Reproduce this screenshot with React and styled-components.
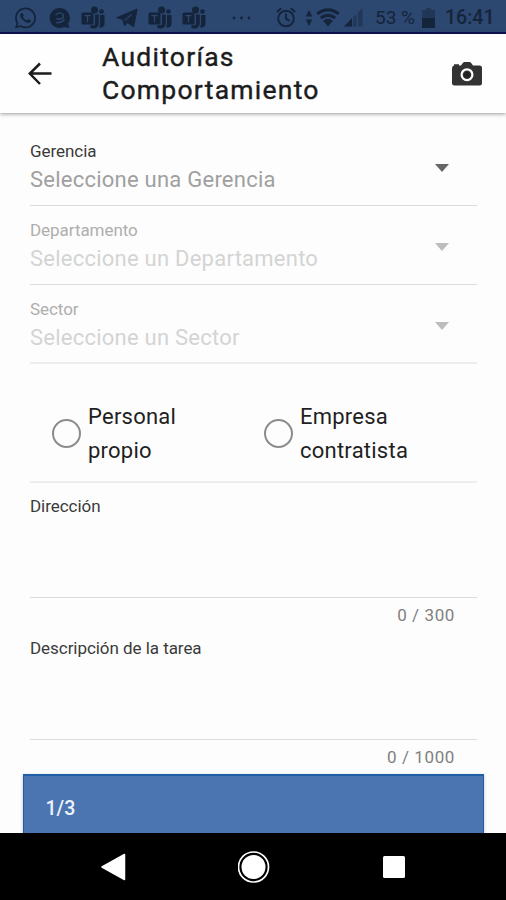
import React, { useState } from 'react';
import styled, { createGlobalStyle } from 'styled-components';
import { FaWhatsapp } from 'react-icons/fa';

const GlobalStyle = createGlobalStyle`
  * {
    box-sizing: border-box;
  }

  body {
    margin: 0;
    background: #fdfdfd;
    font-family: Roboto, 'Noto Sans', sans-serif;
  }
`;

const Screen = styled.div`
  display: flex;
  flex-direction: column;
  width: 506px;
  height: 900px;
  overflow: hidden;
  background: #fdfdfd;
`;

const StatusBar = styled.div`
  display: flex;
  align-items: center;
  flex: 0 0 34px;
  padding: 3px 0 0 14px;
  background: #2c4770;
  border-bottom: 2px solid #0c1255;
  color: #14243b;
`;

const StatusItem = styled.span`
  display: flex;
  flex: none;
  align-items: center;
  width: ${props => props.$width}px;
  margin-right: ${props => props.$gap || 0}px;

  svg {
    display: block;
  }
`;

const StatusText = styled(StatusItem)`
  font-size: ${props => props.$size}px;
  font-weight: ${props => props.$weight};
  line-height: 24px;
  white-space: nowrap;
`;

const Header = styled.header`
  display: flex;
  align-items: center;
  flex: 0 0 79px;
  padding: 0 24px 0 27px;
  background: #fefefe;
  box-shadow: 0 1px 4px rgba(0, 0, 0, 0.4);
  z-index: 1;
`;

const IconButton = styled.button`
  display: flex;
  padding: 0;
  border: 0;
  background: none;
`;

const Title = styled.h1`
  flex: 1;
  margin: 0 0 1px 50px;
  color: #1c1c1c;
  font-size: 26.5px;
  font-weight: 400;
  line-height: 33px;
  letter-spacing: 1.25px;
  -webkit-text-stroke: 0.4px #1c1c1c;
`;

const Form = styled.form`
  flex: 1;
  min-height: 0;
  padding: 14px 29px 0 30px;
`;

const SelectField = styled.div`
  display: flex;
  align-items: center;
  justify-content: space-between;
  height: 79px;
  padding: 3px 28px 0 0;
  border-bottom: ${props => (props.$last ? '2px solid #ededed' : '1px solid #dcdcdc')};
`;

const Label = styled.div`
  color: ${props => (props.$disabled ? '#aeaeae' : '#3a3a3a')};
  font-size: 17px;
  line-height: 20px;
  letter-spacing: -0.05px;
`;

const Placeholder = styled.div`
  margin-top: 5px;
  color: ${props => (props.$disabled ? '#d4d4d4' : '#a0a0a0')};
  font-size: 22px;
  line-height: 28px;
  letter-spacing: 0.24px;
`;

const Caret = styled.span`
  margin-top: 1px;
  border: 7px solid transparent;
  border-top: 8px solid ${props => (props.$disabled ? '#bdbdbd' : '#666')};
  border-bottom: 0;
`;

const RadioRow = styled.div`
  display: grid;
  grid-template-columns: 212px 1fr;
  height: 119px;
  padding: 23px 0 0 22px;
  border-bottom: 2px solid #ededed;
`;

const RadioOption = styled.label`
  display: flex;
  align-items: center;
  gap: 7px;
  height: 94px;
`;

const RadioCircle = styled.span`
  width: 29px;
  height: 29px;
  margin-bottom: 1px;
  border: 2.5px solid #8c8c8c;
  border-radius: 50%;
`;

const RadioText = styled.span`
  width: 130px;
  color: #1f1f1f;
  font-size: 22px;
  line-height: 34px;
  letter-spacing: 0.24px;
`;

const TextField = styled.div`
  display: flex;
  flex-direction: column;
  height: ${props => props.$height}px;
  padding-top: ${props => props.$top}px;
  border-bottom: 1px solid #dcdcdc;
`;

const Counter = styled.div`
  height: 34px;
  padding: 7px 22px 0 0;
  color: #808080;
  font-size: 17px;
  line-height: 20px;
  letter-spacing: 0.6px;
  text-align: right;
`;

const Footer = styled.footer`
  display: flex;
  align-items: center;
  flex: 0 0 59px;
  margin: 0 22px 0 23px;
  padding: 7px 21.5px 0;
  background: #4b75b0;
  border: 2px solid #1e5ea6;
  border-width: 2px 1px 0;
  box-shadow: 0 1px 3px rgba(0, 0, 0, 0.25);
  color: #eef3fb;
  font-size: 19.5px;
  font-weight: 500;
`;

const NavBar = styled.nav`
  display: grid;
  grid-template-columns: 138px 130px 1fr;
  align-items: center;
  flex: 0 0 67px;
  padding-left: 100px;
  background: #000;
  z-index: 1;
`;

const ChatIcon = () => (
  <svg width="22" height="22" viewBox="0 0 22 22" fill="none">
    <path d="M11 1a10 10 0 1 0 4 19l5.500 1-1.400-4.400A10 10 0 0 0 11 1z" fill="currentColor" />
    <path d="M6.500 8q4.500-4 7.500-.5 1.500 3-2 4.500H7.500M7 15.500q5 1 8.500-3" stroke="#2c4770" strokeWidth="1.300" />
  </svg>
);

const TeamsIcon = () => (
  <svg width="25" height="24" viewBox="0 0 25 24" fill="currentColor">
    <circle cx="13.500" cy="4" r="3.500" />
    <circle cx="20.500" cy="5.500" r="2.300" />
    <rect x="0.500" y="6.500" width="12" height="12" rx="1.500" />
    <path d="M14 8.500h3.800v9a5.300 5.300 0 0 1-9 3.500l1.200-1.800h2.500q1.500 0 1.500-2z" />
    <path d="M19 9h4.500v8.500q0 4-4.500 4.200l-1-.7q1-1.200 1-3.500z" />
    <path d="M3.500 9.700h6M6.500 9.700v6.500" stroke="#2c4770" strokeWidth="1.200" />
  </svg>
);

const TelegramIcon = () => (
  <svg width="22" height="20" viewBox="0 0 22 20" fill="currentColor">
    <path d="M.7 9.200 20.500.8q1.200-.3 1 1L18.300 18q-.4 1.500-1.700.7l-5-3.700-2.700 2.700q-.8.600-1-.5L6.300 11.700.8 10.300q-.7-.5-.1-1.100z" />
    <path d="M7.500 12 16 6l-7 7.500" fill="none" stroke="#2c4770" strokeWidth="0.800" />
  </svg>
);

const DotsIcon = () => (
  <svg width="19" height="4" viewBox="0 0 19 4" fill="currentColor">
    <circle cx="2" cy="2" r="1.400" />
    <circle cx="9.500" cy="2" r="1.400" />
    <circle cx="17" cy="2" r="1.400" />
  </svg>
);

const AlarmIcon = () => (
  <svg width="20" height="21" viewBox="0 0 20 21" fill="none" stroke="currentColor" strokeWidth="1.900">
    <circle cx="10" cy="11.500" r="7.800" />
    <path d="M10 6.500v5.200l3.500 2.200M.8 5 5.200 1.300M14.800 1.300 19.200 5" />
  </svg>
);

const DataIcon = () => (
  <svg width="8" height="18" viewBox="0 0 8 18" fill="currentColor">
    <path d="M4 1 7.300 7.500H.7zM4 17l3.300-6.500H.7z" />
  </svg>
);

const WifiIcon = () => (
  <svg width="24" height="19" viewBox="0 0 24 19" fill="none" stroke="currentColor" strokeWidth="3">
    <path d="M1.200 5.800Q12-2.200 22.800 5.800M4.800 9.900q7.200-5 14.400 0" />
    <path d="m12 18.500-5-6q5-3.500 10 0z" fill="currentColor" stroke="none" />
  </svg>
);

const SignalIcon = () => (
  <svg width="19" height="19" viewBox="0 0 19 19" fill="currentColor">
    <path d="M0 18.500 8 10v8.500z" />
    <path d="M9 9.500 12.500 6v12.500H9zM14 4.500 18.500 0v18.500H14z" opacity="0.4" />
  </svg>
);

const BatteryIcon = () => (
  <svg width="13" height="20" viewBox="0 0 13 20" fill="currentColor">
    <path d="M0 2h4V0h5v2h4v8H0z" opacity="0.45" />
    <path d="M0 10h13v10H0z" />
  </svg>
);

const BackIcon = () => (
  <svg width="25" height="24" viewBox="0 0 25 24" fill="none" stroke="#1c1c1c" strokeWidth="2.500">
    <path d="M24.500 11.500H3M13 1.500 2.800 11.500 13 22" />
  </svg>
);

const CameraIcon = () => (
  <svg width="30" height="24" viewBox="0 0 30 24">
    <path
      d="M2 3.500V2.200h5v1.300h2L11 .8q.6-.8 1.500-.8h5q.9 0 1.500.8l2 2.700h6.500q2.500 0 2.500 2.500v15q0 2.500-2.500 2.500h-25Q0 23.500 0 21V6q0-2 2-2.500z"
      fill="#333"
    />
    <circle cx="15" cy="12.700" r="5.400" fill="#333" stroke="#fff" strokeWidth="2.200" />
    <circle cx="15" cy="12.700" r="3" fill="#222" />
  </svg>
);

const selects = [
  { label: 'Gerencia', placeholder: 'Seleccione una Gerencia', disabled: false },
  { label: 'Departamento', placeholder: 'Seleccione un Departamento', disabled: true },
  { label: 'Sector', placeholder: 'Seleccione un Sector', disabled: true },
];

const options = ['Personal propio', 'Empresa contratista'];

const App = () => {
  const [selected, setSelected] = useState(null);

  return (
    <>
      <GlobalStyle />
      <Screen>
        <StatusBar>
          <StatusItem $width={23} $gap={12}><FaWhatsapp size={24} /></StatusItem>
          <StatusItem $width={22} $gap={10}><ChatIcon /></StatusItem>
          <StatusItem $width={25} $gap={10}><TeamsIcon /></StatusItem>
          <StatusItem $width={22} $gap={10}><TelegramIcon /></StatusItem>
          <StatusItem $width={25} $gap={9}><TeamsIcon /></StatusItem>
          <StatusItem $width={25} $gap={25}><TeamsIcon /></StatusItem>
          <StatusItem $width={19} $gap={25}><DotsIcon /></StatusItem>
          <StatusItem $width={20} $gap={9}><AlarmIcon /></StatusItem>
          <StatusItem $width={8} $gap={3}><DataIcon /></StatusItem>
          <StatusItem $width={24} $gap={4}><WifiIcon /></StatusItem>
          <StatusItem $width={19} $gap={12}><SignalIcon /></StatusItem>
          <StatusText $width={41} $gap={6} $size={19} $weight={400}>53 %</StatusText>
          <StatusItem $width={13} $gap={10}><BatteryIcon /></StatusItem>
          <StatusText $width={50} $size={19.5} $weight={500}>16:41</StatusText>
        </StatusBar>
        <Header>
          <IconButton type="button" aria-label="Volver"><BackIcon /></IconButton>
          <Title>Auditorías<br />Comportamiento</Title>
          <IconButton type="button" aria-label="Foto"><CameraIcon /></IconButton>
        </Header>
        <Form>
          {selects.map((field, index) => (
            <SelectField key={field.label} $last={index === selects.length - 1}>
              <div>
                <Label $disabled={field.disabled}>{field.label}</Label>
                <Placeholder $disabled={field.disabled}>{field.placeholder}</Placeholder>
              </div>
              <Caret $disabled={field.disabled} />
            </SelectField>
          ))}
          <RadioRow>
            {options.map(option => (
              <RadioOption key={option} onClick={() => setSelected(option)}>
                <RadioCircle role="radio" aria-checked={selected === option} />
                <RadioText>{option}</RadioText>
              </RadioOption>
            ))}
          </RadioRow>
          <TextField $height={115} $top={13}>
            <Label>Dirección</Label>
          </TextField>
          <Counter>0 / 300</Counter>
          <TextField $height={108} $top={6}>
            <Label>Descripción de la tarea</Label>
          </TextField>
          <Counter>0 / 1000</Counter>
        </Form>
        <Footer>1/3</Footer>
        <NavBar>
          <svg width="26" height="28" viewBox="0 0 26 28">
            <path d="M24.500 1.500v25L2 14z" fill="#fff" stroke="#fff" strokeWidth="1.500" strokeLinejoin="round" />
          </svg>
          <svg width="32" height="32" viewBox="0 0 32 32">
            <circle cx="15.500" cy="16" r="15" fill="none" stroke="#fff" strokeWidth="1.700" />
            <circle cx="15.500" cy="16" r="12" fill="#fff" />
          </svg>
          <svg width="53" height="22" viewBox="0 0 53 22">
            <rect x="15" width="22" height="22" rx="1.500" fill="#fff" />
          </svg>
        </NavBar>
      </Screen>
    </>
  );
};

export default App;
